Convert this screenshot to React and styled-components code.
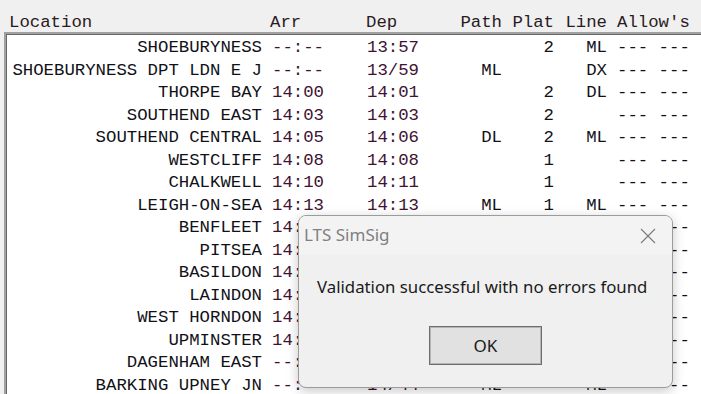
import React from 'react'
import styled, { createGlobalStyle } from 'styled-components'

const GlobalStyle = createGlobalStyle`
  html, body {
    margin: 0;
    padding: 0;
    background: #f0f0f0;
    overflow: hidden;
  }
  body {
    width: 701px;
    height: 394px;
  }
`

const rows = [
  ['SHOEBURYNESS', '--:--', '13:57', '', '2', 'ML', '--- ---'],
  ['SHOEBURYNESS DPT LDN E J', '--:--', '13/59', 'ML', '', 'DX', '--- ---'],
  ['THORPE BAY', '14:00', '14:01', '', '2', 'DL', '--- ---'],
  ['SOUTHEND EAST', '14:03', '14:03', '', '2', '', '--- ---'],
  ['SOUTHEND CENTRAL', '14:05', '14:06', 'DL', '2', 'ML', '--- ---'],
  ['WESTCLIFF', '14:08', '14:08', '', '1', '', '--- ---'],
  ['CHALKWELL', '14:10', '14:11', '', '1', '', '--- ---'],
  ['LEIGH-ON-SEA', '14:13', '14:13', 'ML', '1', 'ML', '--- ---'],
  ['BENFLEET', '14:18', '14:19', '', '2', '', '--- ---'],
  ['PITSEA', '14:23', '14:24', '', '2', '', '--- ---'],
  ['BASILDON', '14:27', '14:28', '', '2', '', '--- ---'],
  ['LAINDON', '14:31', '14:32', '', '2', '', '--- ---'],
  ['WEST HORNDON', '14:36', '14:37', '', '2', '', '--- ---'],
  ['UPMINSTER', '14:41', '14:42', '', '4', '', '--- ---'],
  ['DAGENHAM EAST', '--:--', '14/46', '', '', '', '--- ---'],
  ['BARKING UPNEY JN', '--:--', '14/44', 'ML', '', 'ML', '--- ---'],
]

const App = () => {
  return (
    <>
      <GlobalStyle />
      <Screen>
        <HeaderRow>
          <Cell $pad='0 0 0 9px'>Location</Cell>
          <Cell $pad='0 0 0 8px'>Arr</Cell>
          <Cell>Dep</Cell>
          <Cell $align='right'>Path</Cell>
          <Cell $align='right'>Plat</Cell>
          <Cell $align='right'>Line</Cell>
          <Cell $pad='0 0 0 10px'>Allow's</Cell>
        </HeaderRow>
        <Frame>
          {rows.map((r, i) => (
            <Row key={i}>
              <Cell $align='right'>{r[0]}</Cell>
              <Cell $pad='0 0 0 10px' $time>{r[1]}</Cell>
              <Cell $pad='0 0 0 1px' $time>{r[2]}</Cell>
              <Cell $align='right'>{r[3]}</Cell>
              <Cell $align='right'>{r[4]}</Cell>
              <Cell $align='right'>{r[5]}</Cell>
              <Cell $pad='0 0 0 10px'>{r[6]}</Cell>
            </Row>
          ))}
        </Frame>

        <Dialog>
          <TitleBar>
            <Title>LTS SimSig</Title>
            <CloseBtn>
              <svg width='16' height='16' viewBox='0 0 16 16'>
                <path d='M1 1 L15 15 M15 1 L1 15' stroke='#7a7a7a' strokeWidth='1.1' fill='none' />
              </svg>
            </CloseBtn>
          </TitleBar>
          <Message>Validation successful with no errors found</Message>
          <ButtonBar>
            <OkButton>OK</OkButton>
          </ButtonBar>
        </Dialog>
      </Screen>
    </>
  )
}

const Screen = styled.div`
  position: relative;
  width: 701px;
  height: 394px;
  overflow: hidden;
  background: #f0f0f0;
  font-family: 'Liberation Mono', 'Courier New', monospace;
  font-size: 17.33px;
`

const HeaderRow = styled.div`
  display: grid;
  grid-template-columns: 262px 104px 89px 47px 52px 53px 1fr;
  height: 32px;
  padding-top: 14px;
  box-sizing: border-box;
  line-height: 18px;
  color: #2a1a22;
`

const Frame = styled.div`
  margin-left: 4px;
  height: 362px;
  background: #fff;
  border-top: 2px solid #a0a0a0;
  border-left: 2px solid #a0a0a0;
  box-shadow: inset 1px 1px 0 #696969;
  padding: 3px 0 0 1px;
  box-sizing: border-box;
`

const Row = styled.div`
  display: grid;
  grid-template-columns: 255px 104px 89px 47px 52px 53px 1fr;
  height: 22.5px;
  line-height: 22.5px;
  color: #111118;
`

const Cell = styled.div`
  white-space: pre;
  overflow: hidden;
  text-align: ${p => p.$align || 'left'};
  padding: ${p => p.$pad || '0'};
  color: ${p => (p.$time ? '#3e1232' : 'inherit')};
`

const Dialog = styled.div`
  position: absolute;
  left: 298px;
  top: 215px;
  width: 375px;
  height: 173px;
  box-sizing: border-box;
  background: #f0f0f0;
  border: 1px solid #9c9c9c;
  border-radius: 8px;
  box-shadow: 0 3px 12px rgba(0, 0, 0, 0.22);
  display: flex;
  flex-direction: column;
  font-family: 'Noto Sans', 'Open Sans', sans-serif;
  overflow: hidden;
`

const TitleBar = styled.div`
  height: 39px;
  display: flex;
  align-items: center;
  justify-content: space-between;
  padding: 0 16px 3px 5px;
  box-sizing: border-box;
  background: #f3f3f3;
`

const Title = styled.span`
  font-size: 17px;
  color: #808080;
`

const CloseBtn = styled.span`
  display: flex;
  width: 16px;
  height: 16px;
  margin-top: 3px;
`

const Message = styled.div`
  margin-top: 21px;
  padding-left: 18px;
  font-size: 16.8px;
  line-height: 22px;
  color: #1a1a1a;
`

const ButtonBar = styled.div`
  display: flex;
  justify-content: center;
  margin-top: 28px;
`

const OkButton = styled.button`
  width: 113px;
  height: 39px;
  background: #e1e1e1;
  border: 1px solid #6e6e6e;
  box-shadow: inset 0 0 0 1px #b4b4b4;
  font-family: 'Noto Sans', 'Open Sans', sans-serif;
  font-size: 17px;
  color: #1a1a1a;
  padding: 0;
`

export default App
